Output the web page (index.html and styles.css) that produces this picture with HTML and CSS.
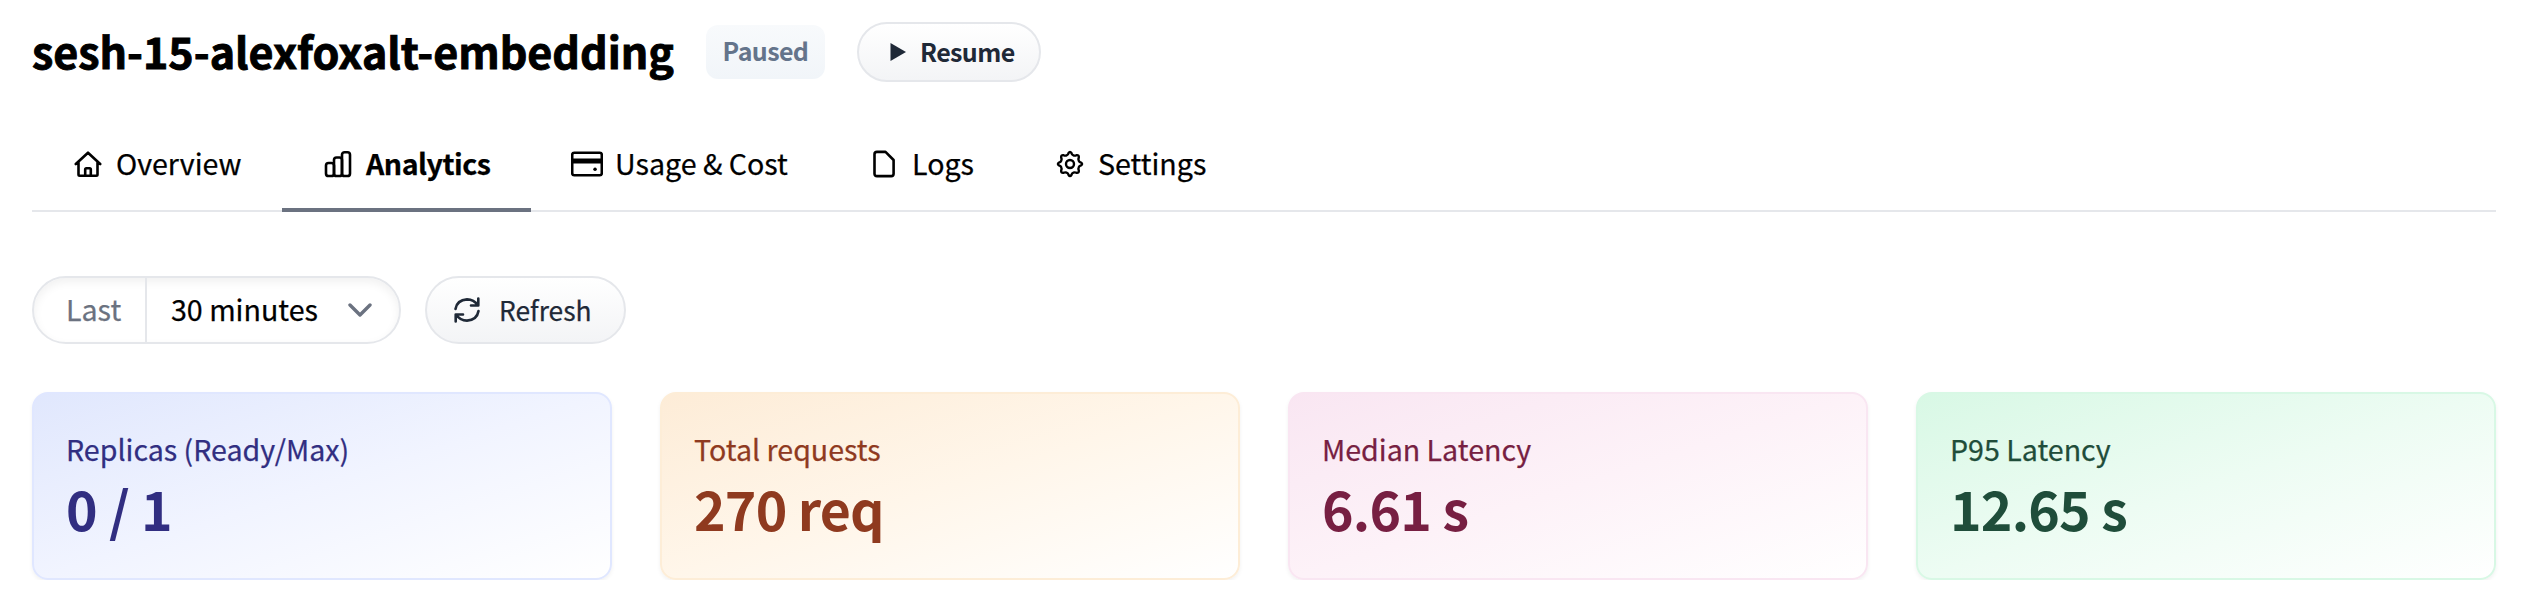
FILE: index.html
```html
<!DOCTYPE html>
<html lang="en">
<head>
<meta charset="utf-8">
<title>sesh-15-alexfoxalt-embedding</title>
<link rel="stylesheet" href="styles.css">
</head>
<body>
<main class="page">
  <header class="header">
    <h1 class="title"><span class="t">sesh-15-alexfoxalt-embedding</span></h1>
    <span class="badge"><span class="t">Paused</span></span>
    <button class="btn resume">
      <svg width="16" height="18" viewBox="0 0 16 18"><path d="M0.5 0 16 9 0.5 18Z"/></svg>
      <span class="t">Resume</span>
    </button>
  </header>
  <nav class="tabs">
    <a class="tab overview">
      <svg width="28" height="26" viewBox="0 0 28 26"><path d="M1.8 13 14 1.7 26.2 13M4.5 11V23.5Q4.5 24.7 5.7 24.7H22.3Q23.5 24.7 23.5 23.5V11M11.2 24V18.5Q11.2 17.3 12.4 17.3H15.6Q16.8 17.3 16.8 18.5V24"/></svg>
      <span class="t">Overview</span>
    </a>
    <a class="tab active analytics">
      <svg width="28" height="28" viewBox="0 0 28 28"><rect x="2" y="13" width="8" height="13" rx="2.6"/><rect x="10" y="7.5" width="8" height="18.5" rx="2.6"/><rect x="18" y="2.2" width="8" height="23.8" rx="2.6"/></svg>
      <span class="t">Analytics</span>
    </a>
    <a class="tab usage">
      <svg width="32" height="26" viewBox="0 0 32 26"><rect x="1.2" y="1.7" width="29.6" height="22.6" rx="2"/><path d="M1 10H31" stroke-width="5"/><path d="M24 18.3H24.1" stroke-width="3.4"/></svg>
      <span class="t">Usage &amp; Cost</span>
    </a>
    <a class="tab logs">
      <svg width="22" height="28" viewBox="0 0 22 28"><path d="M4 1.9H12.5L20.6 10V23.8Q20.6 26.1 18.3 26.1H4Q1.5 26.1 1.5 23.8V4.2Q1.5 1.9 4 1.9Z"/></svg>
      <span class="t">Logs</span>
    </a>
    <a class="tab settings">
      <svg width="28" height="28" viewBox="0 0 28 28"><circle cx="14" cy="14" r="4"/><path d="M10.6 5.3Q12.2 4.8 12.6 3 14 .8 15.4 3 15.8 4.8 17.4 5.3 18.9 6 20.4 5.2 23.2 4.8 22.8 7.6 22 9.1 22.7 10.6 23.2 12.2 25 12.6 27.2 14 25 15.4 23.2 15.8 22.7 17.4 22 18.9 22.8 20.4 23.2 23.2 20.4 22.8 18.9 22 17.4 22.7 15.8 23.2 15.4 25 14 27.2 12.6 25 12.2 23.2 10.6 22.7 9.1 22 7.6 22.8 4.8 23.2 5.2 20.4 6 18.9 5.3 17.4 4.8 15.8 3 15.4 .8 14 3 12.6 4.8 12.2 5.3 10.6 6 9.1 5.2 7.6 4.8 4.8 7.6 5.2 9.1 6 10.6 5.3Z"/></svg>
      <span class="t">Settings</span>
    </a>
  </nav>
  <section class="controls">
    <div class="select">
      <span class="prefix"><span class="t">Last</span></span>
      <span class="value"><span class="t">30 minutes</span>
        <svg width="24" height="14" viewBox="0 0 24 14"><path d="M2 2 12 12 22 2"/></svg>
      </span>
    </div>
    <button class="btn refresh">
      <svg width="26" height="26" viewBox="0 0 26 26"><path d="M1.5 12Q3 3 13 2.4 20 2.4 23.8 8.4M24.3 1.5V8.5H17M24.5 14Q23 23 13 23.6 6 23.6 2.2 17.6M1.7 24.5V17.5H9"/></svg>
      <span class="t">Refresh</span>
    </button>
  </section>
  <section class="cards">
    <article class="card indigo"><span class="label">Replicas (Ready/Max)</span><strong class="number">0 / 1</strong></article>
    <article class="card orange"><span class="label">Total requests</span><strong class="number">270 req</strong></article>
    <article class="card pink"><span class="label">Median Latency</span><strong class="number">6.61 s</strong></article>
    <article class="card green"><span class="label">P95 Latency</span><strong class="number">12.65 s</strong></article>
  </section>
</main>
</body>
</html>
```
FILE: styles.css
```css
* { box-sizing: border-box; }
body { margin: 0; background: #fff; color: #000; font-family: "Noto Sans CJK SC", sans-serif; font-size: 28.6px; line-height: 48px; -webkit-text-stroke: 0.25px currentColor; }
.page { padding: 22px 26px 0 32px; }
svg { flex: none; display: block; fill: none; stroke: currentColor; stroke-width: 2.6; stroke-linejoin: round; stroke-linecap: round; }
.t { display: block; white-space: nowrap; padding-bottom: 2px; }
.header { display: flex; align-items: center; height: 60px; }
.title { margin: 0; width: 674px; font-size: 43px; line-height: 58px; font-weight: 700; -webkit-text-stroke: 0.9px #000; }
.title .t { padding-bottom: 4px; }
.badge { width: 119px; height: 54px; border-radius: 12px; margin-right: 32px; text-align: center; line-height: 50px; font-size: 25px; font-weight: 700; letter-spacing: -0.6px; color: #64748b; background: linear-gradient(#f8fafc, #f1f5f9); -webkit-text-stroke: 0; }
.btn { display: flex; align-items: center; border: 2px solid #e5e7eb; background: linear-gradient(#fff, #f3f4f6); color: #1f2937; font-family: inherit; padding: 0; }
.resume { width: 184px; height: 60px; border-radius: 30px; font-size: 25px; font-weight: 700; letter-spacing: -0.6px; padding-left: 31px; gap: 14px; -webkit-text-stroke: 0; }
.resume svg { stroke: none; fill: currentColor; }
.tabs { display: flex; height: 90px; margin-top: 40px; border-bottom: 2px solid #e5e7eb; }
.tab { display: flex; align-items: center; height: 90px; padding: 0 0 6px 42px; gap: 14px; }
.active { font-weight: 700; letter-spacing: -0.5px; border-bottom: 4px solid #6b7280; padding-bottom: 2px; }
.overview { width: 250px; }
.analytics { width: 249px; }
.usage { width: 299px; padding-left: 40px; gap: 12px; }
.logs { width: 186px; padding-left: 43px; gap: 17px; }
.settings { padding-left: 40px; }
.settings svg { stroke-width: 2.4; }
.controls { display: flex; gap: 24px; margin-top: 64px; height: 68px; }
.select { display: flex; width: 369px; border: 2px solid #e5e7eb; border-radius: 34px; box-shadow: inset 0 4px 10px rgba(0,0,0,.06); line-height: 62px; }
.prefix { width: 113px; padding-left: 32px; border-right: 2px solid #e5e7eb; color: #6b7280; }
.value { display: flex; flex: 1; align-items: center; justify-content: space-between; padding: 0 27px 0 24px; }
.value svg { color: #6b7280; stroke-width: 3.4; }
.refresh { width: 201px; height: 68px; border-radius: 34px; padding-left: 27px; gap: 19px; font-size: 26.4px; -webkit-text-stroke: 0.25px currentColor; }
.cards { display: grid; grid-template-columns: repeat(4, 1fr); gap: 48px; margin-top: 48px; }
.card { height: 188px; border: 2px solid; border-radius: 16px; padding: 33px 32px; display: flex; flex-direction: column; box-shadow: 0 2px 4px rgba(0,0,0,.06); }
.label { line-height: 44px; }
.number { margin-top: 1px; font-size: 53.6px; line-height: 72px; font-weight: 700; letter-spacing: -0.8px; -webkit-text-stroke: 0; }
.indigo { color: #312e81; border-color: #e0e7ff; background: linear-gradient(to bottom right, #e0e7fd, #f1f4ff 50%, #fff) border-box; }
.indigo .number { letter-spacing: -0.4px; }
.orange { color: #8f3a1f; border-color: #fdedd7; background: linear-gradient(to bottom right, #fdecd7, #fff6ea 50%, #fff) border-box; }
.pink { color: #771f42; border-color: #f9e6f2; background: linear-gradient(to bottom right, #f9e6f2, #fdf2f8 50%, #fff) border-box; }
.green { color: #1f4d3a; border-color: #d8f8e5; background: linear-gradient(to bottom right, #d8f8e5, #edfcf3 50%, #fff) border-box; }
```
